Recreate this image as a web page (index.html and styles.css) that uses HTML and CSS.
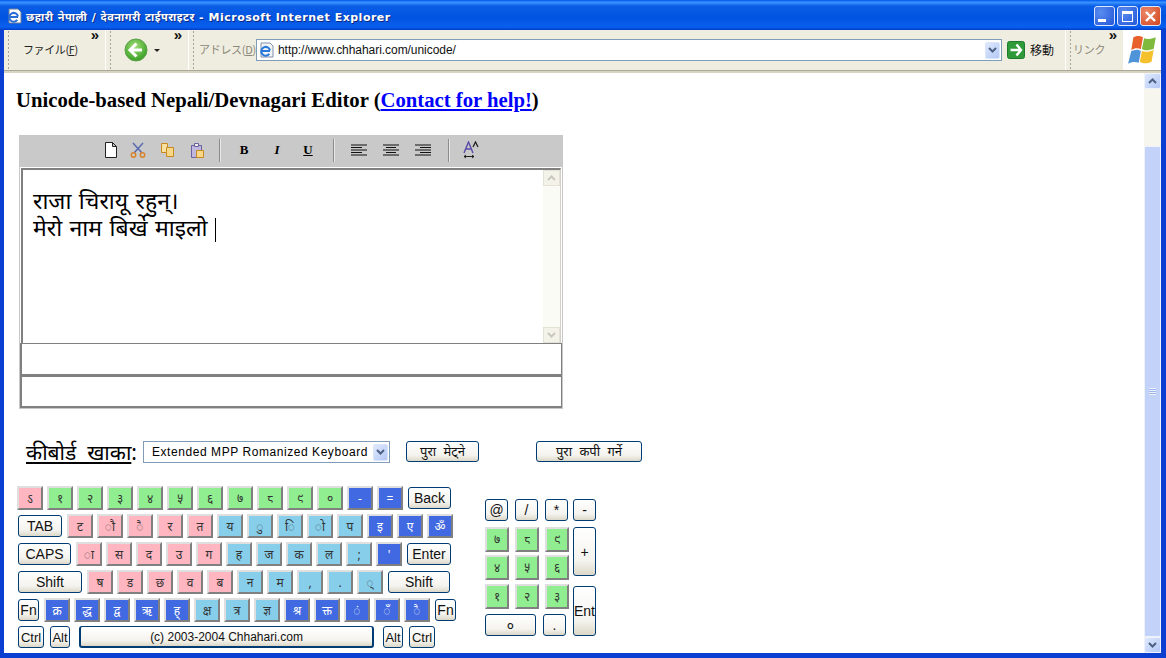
FILE: index.html
```html
<!DOCTYPE html>
<html lang="ne">
<head>
  <meta charset="UTF-8">
  <title>छहारी नेपाली / देवनागरी टाईपराइटर</title>
  <link rel="stylesheet" href="styles.css">
</head>

<body>
  <div class="window">
    <!-- Title bar -->
    <div class="titlebar">
      <svg class="title-icon" width="16" height="16" viewBox="0 0 16 16">
        <path d="M2 1h9l3 3v11H2z" fill="#fff" stroke="#6b7f99"/>
        <path d="M11 8.500A4.400 4.400 0 1 0 10.300 11.800M3 9h8" fill="none" stroke="#2a6fd6" stroke-width="2"/>
      </svg>
      <span class="title-text">छहारी नेपाली / देवनागरी टाईपराइटर - Microsoft Internet Explorer</span>
      <div class="caption-btns">
        <div class="cap-btn"><span class="cap-min"></span></div>
        <div class="cap-btn"><span class="cap-max"></span></div>
        <div class="cap-btn cap-close">
          <svg width="13" height="13" viewBox="0 0 13 13"><path d="M2 2l9 9M11 2l-9 9" stroke="#fff" stroke-width="2.4"/></svg>
        </div>
      </div>
    </div>

    <!-- Browser toolbar -->
    <div class="toolbar">
      <div class="band band-menu">
        <span class="menu-text">ファイル(<u>F</u>)</span>
        <span class="more">»</span>
      </div>
      <div class="band band-back">
        <svg width="24" height="24" viewBox="0 0 24 24">
          <defs>
            <radialGradient id="greenBall" cx="45%" cy="35%" r="70%">
              <stop offset="0" stop-color="#a6e07a"/>
              <stop offset="1" stop-color="#2f9a1e"/>
            </radialGradient>
          </defs>
          <circle cx="12" cy="12" r="11" fill="url(#greenBall)" stroke="#5da24a"/>
          <path d="M12.5 5.5L6 12l6.500 6.500M6.500 12H18" fill="none" stroke="#fff" stroke-width="3"/>
        </svg>
        <span class="caret"></span>
        <span class="more">»</span>
      </div>
      <div class="band band-address">
        <span class="address-label">アドレス(<u>D</u>)</span>
        <div class="address-box">
          <svg width="16" height="16" viewBox="0 0 16 16">
            <path d="M2 1h9l3 3v11H2z" fill="#f2f4f8" stroke="#7f90a8"/>
            <path d="M11 8.500A4.400 4.400 0 1 0 10.300 11.800M3 9h8" fill="none" stroke="#2a78d8" stroke-width="2"/>
          </svg>
          <span class="address-url">http://www.chhahari.com/unicode/</span>
          <div class="xp-arrow">
            <svg width="9" height="6" viewBox="0 0 9 6"><path d="M1 1l3.500 3.500L8 1" fill="none" stroke="#4d6185" stroke-width="2"/></svg>
          </div>
        </div>
        <svg class="go-icon" width="18" height="18" viewBox="0 0 18 18">
          <rect x="0.500" y="0.500" width="17" height="17" rx="2" fill="#2f9a3a" stroke="#1f7a2c"/>
          <path d="M9.500 3.500L14 9l-4.500 5.500M3.500 9H13" fill="none" stroke="#fff" stroke-width="2.400"/>
        </svg>
        <span class="go-text">移動</span>
      </div>
      <div class="band band-links">
        <span class="address-label">リンク</span>
        <span class="more">»</span>
      </div>
      <div class="brand">
        <svg width="32" height="32" viewBox="0 0 30 30">
          <path d="M6 3c4-2 7-1 9 0l-2 11c-3-1-6-1-9 1z" fill="#e8602c"/>
          <path d="M16 4c3 1 6 1 11-1l-2 11c-4 1-8 2-11 0z" fill="#7fba3c"/>
          <path d="M4 16c3-1 6-2 9 0l-2 11c-3-1-7-1-10 1z" fill="#4f94d8"/>
          <path d="M14 16c3 1 7 1 11-1l-2 11c-4 2-8 2-11 0z" fill="#f4c02c"/>
        </svg>
      </div>
    </div>
    <div class="toolbar-edge"></div>

    <div class="viewport">
      <!-- Page -->
      <div class="page">
        <h1 class="page-title">Unicode-based Nepali/Devnagari Editor (<a href="#">Contact for help!</a>)</h1>

        <div class="editor">
          <div class="editor-tools">
            <svg class="tool tool-new" width="16" height="18" viewBox="0 0 16 18"><path d="M2.500 1.500h7l4 4v11h-11zM9.500 1.500v4h4" fill="#fff" stroke="#222"/></svg>
            <svg class="tool tool-cut" width="16" height="16" viewBox="0 0 16 16"><path d="M3 1l9 10M13 1L4 11" stroke="#5a6ab0" stroke-width="1.500" fill="none"/><circle cx="3.500" cy="13" r="2.200" fill="none" stroke="#d8842c" stroke-width="1.500"/><circle cx="12.500" cy="13" r="2.200" fill="none" stroke="#d8842c" stroke-width="1.500"/></svg>
            <svg class="tool tool-copy" width="15" height="16" viewBox="0 0 15 16"><path d="M1.500 1.500h6v9h-6z" fill="#f8e0a0" stroke="#c88a20"/><path d="M6.500 5.500h7v9h-7z" fill="#f8d888" stroke="#c88a20"/></svg>
            <svg class="tool tool-paste" width="15" height="17" viewBox="0 0 15 17"><path d="M1.500 3.500h10v12h-10z" fill="#c0b8dc" stroke="#6a62a0"/><path d="M4.500 1.500h4v3h-4z" fill="#eee" stroke="#6a62a0"/><path d="M6.500 8.500h7v7h-7z" fill="#f8d888" stroke="#c88a20"/></svg>
            <span class="tool-sep sep-a"></span>
            <span class="fmt fmt-b">B</span>
            <span class="fmt fmt-i">I</span>
            <span class="fmt fmt-u">U</span>
            <span class="tool-sep sep-b"></span>
            <svg class="tool tool-left" width="16" height="13" viewBox="0 0 16 13"><path d="M0 1h16M0 3.500h11M0 6h16M0 8.500h11M0 11h16" stroke="#111" stroke-width="1.200"/></svg>
            <svg class="tool tool-mid" width="16" height="13" viewBox="0 0 16 13"><path d="M0 1h16M3 3.500h10M0 6h16M3 8.500h10M0 11h16" stroke="#111" stroke-width="1.200"/></svg>
            <svg class="tool tool-right" width="16" height="13" viewBox="0 0 16 13"><path d="M0 1h16M5 3.500h11M0 6h16M5 8.500h11M0 11h16" stroke="#111" stroke-width="1.200"/></svg>
            <span class="tool-sep sep-c"></span>
            <svg class="tool tool-size" width="16" height="18" viewBox="0 0 16 18"><path d="M1 12L5.500 1 10 12M3 8h5" fill="none" stroke="#5a4aa8" stroke-width="1.400"/><path d="M10 6l2.500-5L15 6" fill="none" stroke="#222" stroke-width="1.300"/><path d="M1 15.500h10M1 15.500l2-1.500M1 15.500l2 1.500M11 15.500l-2-1.500M11 15.500l-2 1.500" stroke="#222" fill="none"/></svg>
          </div>
          <div class="edit-area">
            <div class="edit-text">
              <div>राजा चिरायू रहुन्।</div>
              <div>मेरो नाम बिर्खे माइलो <span class="cursor"></span></div>
            </div>
            <div class="edit-scroll">
              <div class="edit-scroll-btn"><svg width="9" height="6" viewBox="0 0 9 6"><path d="M1 5l3.500-3.500L8 5" fill="none" stroke="#c8c8bc" stroke-width="2"/></svg></div>
              <div class="edit-scroll-btn"><svg width="9" height="6" viewBox="0 0 9 6"><path d="M1 1l3.500 3.500L8 1" fill="none" stroke="#c8c8bc" stroke-width="2"/></svg></div>
            </div>
          </div>
          <div class="status-row"></div>
          <div class="status-row status-last"></div>
        </div>

        <div class="layout-row">
          <span class="layout-label"><u>कीबोर्ड &nbsp;खाका</u>:</span>
          <div class="layout-select">
            <span class="layout-value">Extended MPP Romanized Keyboard</span>
            <div class="xp-arrow">
              <svg width="9" height="6" viewBox="0 0 9 6"><path d="M1 1l3.500 3.500L8 1" fill="none" stroke="#4d6185" stroke-width="2"/></svg>
            </div>
          </div>
          <button class="xp-btn btn-clear">पुरा मेट्ने</button>
          <button class="xp-btn btn-copy">पुरा कपी गर्ने</button>
        </div>

        <div class="keyboard">
          <div class="keys-main">
            <div class="key-row">
              <div class="key pink">ऽ</div>
              <div class="key green">१</div>
              <div class="key green">२</div>
              <div class="key green">३</div>
              <div class="key green">४</div>
              <div class="key green">५</div>
              <div class="key green">६</div>
              <div class="key green">७</div>
              <div class="key green">८</div>
              <div class="key green">९</div>
              <div class="key green">०</div>
              <div class="key blue">-</div>
              <div class="key blue">=</div>
              <button class="xp-btn kb-btn w-back">Back</button>
            </div>
            <div class="key-row">
              <button class="xp-btn kb-btn w-tab">TAB</button>
              <div class="key pink">ट</div>
              <div class="key pink">ौ</div>
              <div class="key pink">ै</div>
              <div class="key pink">र</div>
              <div class="key pink">त</div>
              <div class="key sky">य</div>
              <div class="key sky">ु</div>
              <div class="key sky">ि</div>
              <div class="key sky">ो</div>
              <div class="key sky">प</div>
              <div class="key blue">इ</div>
              <div class="key blue">ए</div>
              <div class="key blue">ॐ</div>
            </div>
            <div class="key-row">
              <button class="xp-btn kb-btn w-caps">CAPS</button>
              <div class="key pink">ा</div>
              <div class="key pink">स</div>
              <div class="key pink">द</div>
              <div class="key pink">उ</div>
              <div class="key pink">ग</div>
              <div class="key sky">ह</div>
              <div class="key sky">ज</div>
              <div class="key sky">क</div>
              <div class="key sky">ल</div>
              <div class="key sky">;</div>
              <div class="key blue">'</div>
              <button class="xp-btn kb-btn w-enter">Enter</button>
            </div>
            <div class="key-row">
              <button class="xp-btn kb-btn w-shift">Shift</button>
              <div class="key pink">ष</div>
              <div class="key pink">ड</div>
              <div class="key pink">छ</div>
              <div class="key pink">व</div>
              <div class="key pink">ब</div>
              <div class="key sky">न</div>
              <div class="key sky">म</div>
              <div class="key sky">,</div>
              <div class="key sky">.</div>
              <div class="key sky">्</div>
              <button class="xp-btn kb-btn w-shift2">Shift</button>
            </div>
            <div class="key-row">
              <button class="xp-btn kb-btn w-fn">Fn</button>
              <div class="key blue">क्र</div>
              <div class="key blue">द्ध</div>
              <div class="key blue">द्व</div>
              <div class="key blue">ऋ</div>
              <div class="key blue">ह्</div>
              <div class="key sky">क्ष</div>
              <div class="key sky">त्र</div>
              <div class="key sky">ज्ञ</div>
              <div class="key blue">श्र</div>
              <div class="key blue">क्त</div>
              <div class="key blue">ं</div>
              <div class="key blue">ँ</div>
              <div class="key blue">ै</div>
              <button class="xp-btn kb-btn w-fn">Fn</button>
            </div>
            <div class="key-row bottom-row">
              <button class="xp-btn kb-btn w-ctrl">Ctrl</button>
              <button class="xp-btn kb-btn w-alt">Alt</button>
              <button class="xp-btn kb-btn w-space">(c) 2003-2004 Chhahari.com</button>
              <button class="xp-btn kb-btn w-alt">Alt</button>
              <button class="xp-btn kb-btn w-ctrl">Ctrl</button>
            </div>
          </div>

          <div class="numpad">
            <button class="xp-btn np-btn at">@</button>
            <button class="xp-btn np-btn">/</button>
            <button class="xp-btn np-btn">*</button>
            <button class="xp-btn np-btn">-</button>
            <div class="key green np-key">७</div>
            <div class="key green np-key">८</div>
            <div class="key green np-key">९</div>
            <button class="xp-btn np-btn np-plus">+</button>
            <div class="key green np-key">४</div>
            <div class="key green np-key">५</div>
            <div class="key green np-key">६</div>
            <div class="key green np-key">१</div>
            <div class="key green np-key">२</div>
            <div class="key green np-key">३</div>
            <button class="xp-btn np-btn np-ent">Ent</button>
            <button class="xp-btn np-btn np-zero">०</button>
            <button class="xp-btn np-btn np-dot">.</button>
          </div>
        </div>
      </div>

      <!-- Window scrollbar -->
      <div class="scrollbar">
        <div class="scroll-btn"><svg width="9" height="6" viewBox="0 0 9 6"><path d="M1 5l3.500-3.500L8 5" fill="none" stroke="#4d6185" stroke-width="2"/></svg></div>
        <div class="scroll-track"><div class="scroll-thumb"><span class="scroll-grip"></span></div></div>
        <div class="scroll-btn"><svg width="9" height="6" viewBox="0 0 9 6"><path d="M1 1l3.500 3.500L8 1" fill="none" stroke="#4d6185" stroke-width="2"/></svg></div>
      </div>
    </div>
  </div>
</body>
</html>
```
FILE: styles.css
```css
body {
  margin: 0;
  overflow: hidden;
  background-color: #fff;
  font-family: "Liberation Sans", "Noto Sans", sans-serif;
}

.window {
  width: 1166px;
  height: 658px;
  box-sizing: border-box;
  padding: 0 5px 5px 4px;
  background-color: #0a3fd2;
  display: flex;
  flex-direction: column;
}

/* Title bar */
.titlebar {
  height: 30px;
  margin: 0 -5px 0 -4px;
  padding: 2px 5px 0 7px;
  box-sizing: border-box;
  flex: none;
  display: flex;
  align-items: center;
  background: linear-gradient(#0058ee 0%, #3a93ff 8%, #0a5ee6 20%, #0053e0 60%, #0a60ee 90%, #003dc8 100%);
}

.title-icon {
  flex: none;
}

.title-text {
  margin-left: 3px;
  color: #fff;
  font-family: "DejaVu Sans", "Noto Sans", sans-serif;
  font-size: 11px;
  font-weight: bold;
  letter-spacing: 0.5px;
  text-shadow: 1px 1px #0f2a80;
}

.caption-btns {
  margin-left: auto;
  display: flex;
  gap: 2px;
}

.cap-btn {
  width: 21px;
  height: 20px;
  box-sizing: border-box;
  border: 1px solid #dfe8fb;
  border-radius: 3px;
  background: radial-gradient(circle at 30% 30%, #5a8cf0, #2456d8);
  display: flex;
  align-items: center;
  justify-content: center;
}

.cap-min {
  width: 8px;
  height: 3px;
  margin: 8px 6px 0 0;
  background-color: #fff;
}

.cap-max {
  width: 11px;
  height: 11px;
  box-sizing: border-box;
  border: 1px solid #fff;
  border-top-width: 3px;
}

.cap-close {
  background: radial-gradient(circle at 30% 30%, #ec8a6c, #d0441c);
}

/* Browser toolbar */
.toolbar {
  height: 40px;
  flex: none;
  display: flex;
  background-color: #efede0;
  font-family: "Noto Sans CJK JP", sans-serif;
  font-size: 11px;
}

.band {
  box-sizing: border-box;
  height: 100%;
  display: flex;
  align-items: center;
  position: relative;
  border-right: 1px solid #fff;
  background-image: radial-gradient(circle, #a8a596 1px, transparent 1px);
  background-size: 3px 4px;
  background-position: 3px 0;
  background-repeat: repeat-y;
}

.band-menu {
  width: 102px;
  padding: 0 0 3px 19px;
}

.band-back {
  width: 83px;
  padding-left: 18px;
}

.band-address {
  flex: 1;
  padding-left: 10px;
}

.band-links {
  width: 58px;
  padding: 0 0 3px 7px;
}

.menu-text {
  color: #222;
  letter-spacing: -0.4px;
  white-space: nowrap;
}

.more {
  position: absolute;
  top: -1px;
  right: 6px;
  font-family: "Liberation Sans", sans-serif;
  font-size: 15px;
  font-weight: bold;
  line-height: 12px;
  color: #111;
}

.caret {
  width: 0;
  height: 0;
  margin-left: 6px;
  border: 3px solid transparent;
  border-top-color: #222;
  border-bottom-width: 0;
}

.address-label {
  color: #8a8878;
  letter-spacing: -0.3px;
  white-space: nowrap;
  flex: none;
  width: 57px;
  margin-bottom: 3px;
}

.band-links .address-label {
  margin-bottom: 0;
}

.address-box {
  width: 746px;
  height: 22px;
  box-sizing: border-box;
  flex: none;
  padding: 0 1px 0 2px;
  display: flex;
  align-items: center;
  background-color: #fff;
  border: 1px solid #7f9db9;
}

.address-url {
  margin-left: 3px;
  font-family: "Liberation Sans", sans-serif;
  font-size: 12px;
  letter-spacing: -0.05px;
  color: #111;
}

.xp-arrow {
  width: 15px;
  height: 17px;
  margin-left: auto;
  flex: none;
  box-sizing: border-box;
  border: 1px solid #dbe5fa;
  border-radius: 2px;
  background: linear-gradient(135deg, #dfe9fd, #b4c8f6);
  display: flex;
  align-items: center;
  justify-content: center;
}

.go-icon {
  margin-left: 5px;
  flex: none;
}

.go-text {
  margin: 0 0 2px 5px;
  color: #111;
  font-size: 12px;
}

.brand {
  width: 37px;
  flex: none;
  background-color: #fff;
  display: flex;
  align-items: center;
  justify-content: center;
}

.toolbar-edge {
  height: 3px;
  flex: none;
  background-color: #d8d4c2;
  border-top: 1px solid #aca899;
  box-sizing: border-box;
}

/* Content and scrollbar */
.viewport {
  flex: 1;
  min-height: 0;
  display: flex;
  background-color: #fff;
}

.page {
  flex: 1;
  padding: 16px 0 0 12px;
  overflow: hidden;
  color: #000;
}

.page-title {
  margin: 0;
  font-family: "Liberation Serif", serif;
  font-size: 20.7px;
  line-height: 23px;
}

.page-title a {
  color: #0000ff;
}

/* Editor */
.editor {
  width: 544px;
  height: 274px;
  box-sizing: border-box;
  margin: 23px 0 0 3px;
  border: 1px solid #c8c8c8;
  display: flex;
  flex-direction: column;
}

.editor-tools {
  height: 31px;
  flex: none;
  padding-bottom: 3px;
  box-sizing: border-box;
  display: flex;
  align-items: center;
  background-color: #c9c9c9;
}

.tool {
  flex: none;
}

.tool-new { margin-left: 83px; }
.tool-cut { margin-left: 11px; }
.tool-copy { margin-left: 14px; }
.tool-paste { margin-left: 15px; }

.tool-sep {
  width: 1px;
  height: 23px;
  flex: none;
  background-color: #8c8c8c;
  border-right: 1px solid #e8e8e8;
}

.sep-a { margin-left: 14px; }
.sep-b { margin-left: 18px; }
.sep-c { margin-left: 17px; }

.fmt {
  width: 14px;
  flex: none;
  font-family: "Liberation Serif", serif;
  font-size: 13px;
  font-weight: bold;
  text-align: center;
}

.fmt-b { margin-left: 16px; }
.fmt-i { margin-left: 19px; font-style: italic; }
.fmt-u { margin-left: 17px; text-decoration: underline; }

.tool-left { margin-left: 16px; }
.tool-mid { margin-left: 16px; }
.tool-right { margin-left: 16px; }
.tool-size { margin-left: 13px; }

.edit-area {
  height: 175px;
  flex: none;
  margin: 1px 1px 0 1px;
  box-sizing: border-box;
  display: flex;
  border: 2px solid #808080;
  border-right: 1px solid #d4d0c8;
  border-bottom: 0;
}

.edit-text {
  flex: 1;
  padding: 17px 0 0 10px;
  font-family: "Noto Sans", "Noto Sans CJK JP", sans-serif;
  font-size: 23px;
  word-spacing: 1.5px;
  line-height: 27px;
  color: #000;
}

.cursor {
  display: inline-block;
  width: 1px;
  height: 24px;
  vertical-align: middle;
  background-color: #000;
}

.edit-scroll {
  width: 17px;
  flex: none;
  background-color: #fbfbf5;
  display: flex;
  flex-direction: column;
  justify-content: space-between;
}

.edit-scroll-btn {
  height: 16px;
  box-sizing: border-box;
  background-color: #f4f3ea;
  border: 1px solid #e4e2d4;
  display: flex;
  align-items: center;
  justify-content: center;
}

.status-row {
  height: 32px;
  flex: none;
  box-sizing: border-box;
  border: 1px solid #808080;
  border-left-width: 2px;
}

.status-last {
  border-top-width: 2px;
  border-bottom-width: 2px;
  height: 33px;
}

/* Keyboard layout picker */
.layout-row {
  margin: 32px 0 0 10px;
  height: 22px;
  display: flex;
  align-items: flex-start;
}

.layout-label {
  width: 117px;
  flex: none;
  font-family: "Noto Sans", sans-serif;
  font-size: 21px;
  line-height: 22px;
  white-space: nowrap;
}

.layout-select {
  width: 247px;
  height: 22px;
  flex: none;
  box-sizing: border-box;
  padding: 0 1px 0 8px;
  border: 1px solid #7f9db9;
  display: flex;
  align-items: center;
}

.layout-value {
  font-size: 12px;
  letter-spacing: 0.56px;
  white-space: nowrap;
}

.xp-btn {
  box-sizing: border-box;
  padding: 0;
  border: 1px solid #003c74;
  border-radius: 3px;
  background: linear-gradient(#fff, #f4f3ee 70%, #dcd8c8);
  color: #111;
  font-family: "Liberation Sans", "Noto Sans", sans-serif;
  font-size: 14px;
  white-space: nowrap;
}

.btn-clear {
  width: 73px;
  height: 21px;
  margin-left: 16px;
  font-family: "Noto Sans", sans-serif;
  font-size: 13px;
  line-height: 17px;
  word-spacing: 4px;
}

.btn-copy {
  width: 106px;
  height: 21px;
  margin-left: 57px;
  font-family: "Noto Sans", sans-serif;
  font-size: 13px;
  line-height: 17px;
  word-spacing: 4px;
}

/* On-screen keyboard */
.keyboard {
  margin: 23px 0 0 1px;
  display: flex;
  align-items: flex-start;
}

.keys-main {
  width: 438px;
  flex: none;
  display: flex;
  flex-direction: column;
  gap: 4px;
}

.key-row {
  height: 24px;
  display: flex;
  align-items: center;
  gap: 4px;
}

.bottom-row {
  margin-top: -1px;
}

.key {
  width: 26px;
  height: 24px;
  flex: none;
  box-sizing: border-box;
  border: 2px solid;
  border-color: #dfdfdf #808080 #808080 #dfdfdf;
  display: flex;
  align-items: center;
  justify-content: center;
  font-family: "Noto Sans", "Liberation Sans", sans-serif;
  font-size: 12px;
  color: #333;
}

.pink { background-color: #ffb6c1; }
.green { background-color: #90ee90; }
.sky { background-color: #87ceeb; }

.blue {
  background-color: #4169e1;
  color: #fff;
}

.kb-btn {
  height: 22px;
  margin: 0 1px;
  flex: none;
}

.w-back { width: 43px; margin-left: 1px; }
.w-tab { width: 44px; }
.w-caps { width: 53px; }
.w-enter { width: 44px; }
.w-shift { width: 64px; }
.w-shift2 { width: 62px; }
.w-fn { width: 21px; }
.w-ctrl { width: 26px; font-size: 13px; }
.w-alt { width: 20px; font-size: 13px; }
.w-space { width: 295px; margin: 0 4px 0 4px; font-size: 12px; border-width: 1px 2px 2px; }

.numpad {
  margin: 13px 0 0 30px;
  display: grid;
  grid-template-columns: 30px 30px 28px 24px;
  grid-template-rows: 28px 28px 29px 30px 24px;
}

.np-btn {
  width: 23px;
  height: 22px;
  font-size: 14px;
}

.np-key {
  width: 24px;
  height: 25px;
}

.np-plus {
  grid-column: 4;
  grid-row: 2 / span 2;
  height: 49px;
}

.np-ent {
  grid-column: 4;
  grid-row: 4 / span 2;
  height: 50px;
  margin-top: 2px;
}

.np-zero {
  grid-column: 1 / span 2;
  grid-row: 5;
  width: 51px;
}

.np-dot {
  grid-column: 3;
  grid-row: 5;
  margin-left: -2px;
}

/* Window scrollbar */
.scrollbar {
  width: 17px;
  flex: none;
  background-color: #f6f5ee;
  display: flex;
  flex-direction: column;
}

.scroll-btn {
  height: 16px;
  flex: none;
  box-sizing: border-box;
  border: 1px solid #eef2fd;
  border-radius: 2px;
  background: linear-gradient(135deg, #dfe9fd, #b4c8f6);
  display: flex;
  align-items: center;
  justify-content: center;
}

.scroll-track {
  flex: 1;
  padding-top: 57px;
  display: flex;
}

.scroll-thumb {
  flex: 1;
  background-color: #c2d2f8;
  border: 1px solid #eef2fd;
  border-radius: 2px;
  display: flex;
  align-items: center;
  justify-content: center;
}

.scroll-grip {
  width: 7px;
  height: 7px;
  background-image: repeating-linear-gradient(#eef2fd 0 1px, #9db4e8 1px 2px);
}
```
